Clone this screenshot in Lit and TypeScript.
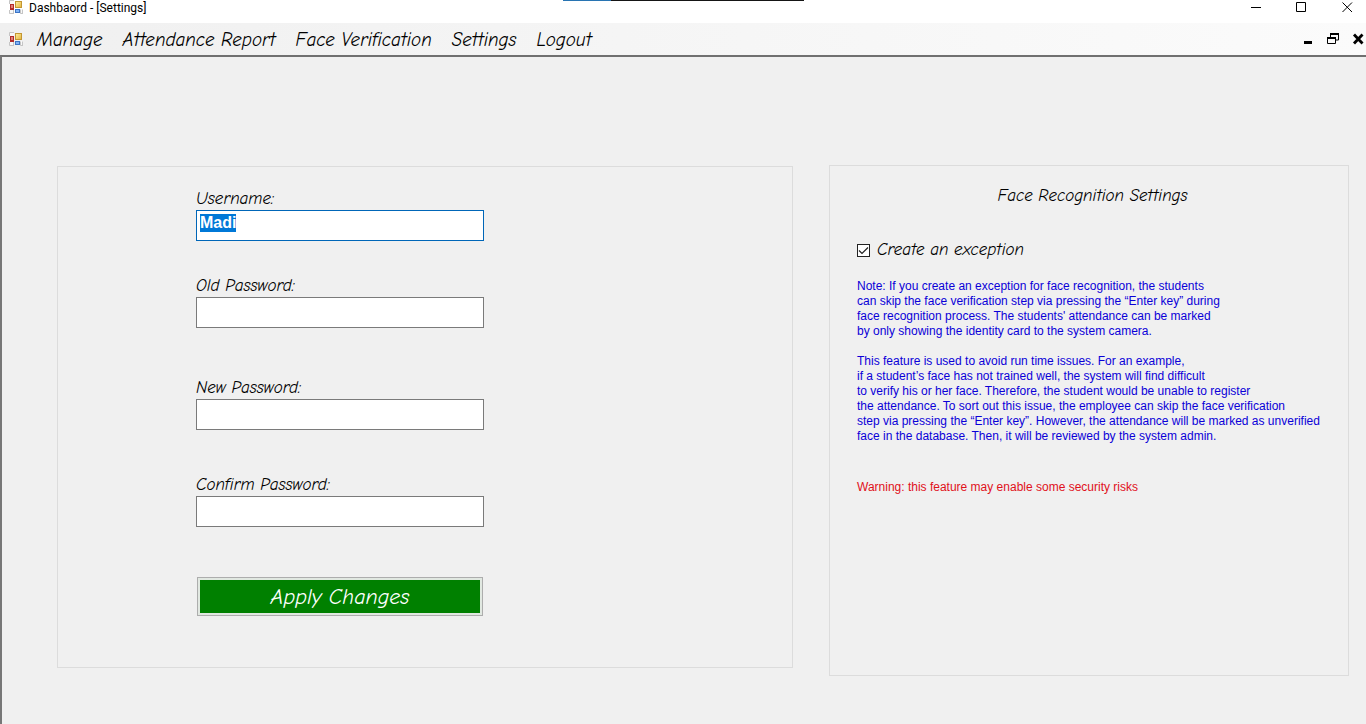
import { LitElement, html, css, svg } from "lit";
import { customElement, state, query } from "lit/decorators.js";

const appIcon = html`<svg class="app-icon" viewBox="0 0 14 14" width="14" height="14" aria-hidden="true">
  ${svg`
  <defs>
    <linearGradient id="gold" x1="0" y1="0" x2="1" y2="1"><stop offset="0" stop-color="#fff0a0"/><stop offset="1" stop-color="#e3b23a"/></linearGradient>
  </defs>
  <path d="M0 0h5v4H0zM0 10h5v4H0zM11 9h3v5h-3z" fill="#f8f8f8"/>
  <path d="M.5 4V.5H5M.5 10v3.500H5M4.500 9.500V14M11.500 9.500v4H14M13.500 9.500V14" fill="none" stroke="#c5c5c5"/>
  <rect x="1" y="4" width="4" height="6" fill="#b32b28"/><rect x="2" y="5" width="2" height="3" fill="#e0807a"/>
  <rect x="6.500" y="1.500" width="6" height="6" fill="url(#gold)" stroke="#c39632"/>
  <rect x="6" y="9" width="5" height="4" fill="#3c74c4"/><rect x="7" y="10" width="3" height="2" fill="#7fb2f5"/>`}
</svg>`;

const fields = [
  { id: "username", label: "Username:", type: "text", value: "Madi" },
  { id: "old-password", label: "Old Password:", type: "password", value: "" },
  { id: "new-password", label: "New Password:", type: "password", value: "" },
  { id: "confirm-password", label: "Confirm Password:", type: "password", value: "" },
];

@customElement("app-root")
class AppRoot extends LitElement {
  @state() private exception = true;
  @query("#username") private username!: HTMLInputElement;

  static styles = css`
    :host {
      display: flex;
      flex-direction: column;
      min-height: 100vh;
      overflow: hidden;
      background: #f0f0f0;
      color: #000;
      font-family: "Comic Sans MS", "Comic Neue", "Noto Sans", sans-serif;
      font-style: italic;
    }
    * { box-sizing: border-box; }
    .titlebar {
      position: relative;
      display: flex;
      align-items: flex-start;
      height: 23px;
      padding-left: 9px;
      background: #fff;
      font: 12px/16px Roboto, "Open Sans", sans-serif;
    }
    .title { margin: 0 auto 0 6px; font: inherit; }
    .strip { position: absolute; top: 0; left: 563px; width: 241px; height: 1px; background: linear-gradient(to right, #2874b2 20%, #151515 20%); }
    .app-icon { display: block; flex: none; }
    .winbtn, .mdibtn { display: grid; place-items: center; padding: 0; border: 0; background: none; color: #000; }
    .winbtn { width: 46px; height: 15px; }
    .winbtn:last-child { margin-right: -4px; }
    .menubar {
      display: flex;
      align-items: center;
      height: 32px;
      padding-left: 9px;
      background: linear-gradient(to right, #f0f0f0, #fbfbfb);
    }
    .menu { display: flex; gap: 20px; margin: 0 auto 0 14px; }
    .menu a { padding-top: 2px; color: #000; text-decoration: none; font-size: 19px; line-height: 30px; white-space: nowrap; }
    .mdibtn { width: 25px; height: 20px; }
    .mdibtn:last-child { margin-right: -4px; }
    .workspace {
      flex: 1;
      display: grid;
      grid-template-columns: 736fr 520fr;
      gap: 36px;
      align-items: start;
      padding: 108px 17px 48px 55px;
      border-top: 2px solid #707070;
      border-left: 2px solid #777;
    }
    .panel { border: 1px solid #dcdcdc; }
    .account { margin-top: 1px; padding: 21px 138px 51px; }
    .form { width: 288px; max-width: 100%; }
    .field { display: flex; flex-direction: column; }
    .field label { font-size: 17px; line-height: 22px; }
    .old-password { margin-top: 34px; }
    .new-password { margin-top: 49px; }
    .confirm-password { margin-top: 44px; }
    .field input {
      width: 100%;
      height: 31px;
      margin: 0;
      padding: 3px 3px 8px;
      border: 1px solid #7a7a7a;
      border-radius: 0;
      outline: none;
      background: #fff;
      color: #000;
      caret-color: transparent;
      font: bold 16px/18px "Liberation Sans", Arial, sans-serif;
    }
    .field input:focus { border-color: #0066b8; }
    .field input::selection { background: #0078d7; color: #fff; }
    .apply {
      display: block;
      width: 286px;
      height: 39px;
      margin: 50px 1px 0;
      padding: 2px 0 0;
      border: 1px solid #adadad;
      background: #008000;
      box-shadow: inset 0 0 0 2px #e1e8e1;
      color: #fff;
      font-family: inherit;
      font-style: inherit;
      font-size: 22px;
      line-height: 35px;
    }
    .recognition { min-height: 511px; padding: 18px 20px 20px 27px; }
    .heading { margin: 0; font-size: 17px; line-height: 24px; font-weight: normal; text-align: center; }
    .check { display: flex; align-items: center; gap: 7px; margin-top: 30px; font-size: 17px; line-height: 24px; }
    .check input {
      appearance: none;
      width: 13px;
      height: 13px;
      margin: 0;
      border: 1px solid #222;
      background: #fff;
    }
    .check input:checked {
      background: #fff url("data:image/svg+xml,%3Csvg xmlns='http://www.w3.org/2000/svg' viewBox='0 0 11 11'%3E%3Cpath d='M1 5.500l3 3L10 2.500' fill='none' stroke='%23222' stroke-width='1.200'/%3E%3C/svg%3E");
    }
    .note { margin: 17px 0 0; font: 12px/15px "Liberation Sans", Arial, sans-serif; white-space: pre-line; color: #0b00d8; }
    .note + .note { margin-top: 15px; }
    .note.warning { margin-top: 36px; color: #e0101b; }
  `;

  firstUpdated() {
    this.username.focus();
    this.username.select();
  }

  render() {
    return html`
      <header class="titlebar">
        ${appIcon}
        <h1 class="title">Dashbaord - [Settings]</h1>
        <div class="strip"></div>
        <button class="winbtn" aria-label="Minimize"><svg width="11" height="11"><path d="M1 5.500h10" stroke="#000" /></svg></button>
        <button class="winbtn" aria-label="Maximize"><svg width="11" height="11"><path d="M.5 .5h9v9h-9z" fill="none" stroke="#000" /></svg></button>
        <button class="winbtn" aria-label="Close"><svg width="11" height="11"><path d="M.5 .5l9.500 9.500M10 .5l-9.500 9.500" stroke="#000" /></svg></button>
      </header>
      <div class="menubar">
        ${appIcon}
        <nav class="menu">
          ${["Manage", "Attendance Report", "Face Verification", "Settings", "Logout"].map((m) => html`<a href="#">${m}</a>`)}
        </nav>
        <button class="mdibtn" aria-label="Minimize child"><svg width="12" height="12"><path d="M2 8h8v3H2z" /></svg></button>
        <button class="mdibtn" aria-label="Restore child"><svg width="12" height="12"><path d="M3.500 4V1.500h8v5.500H9" fill="none" stroke="#000" /><path d="M3 0h9v2H3zM0 4h9v2H0z" /><path d="M.5 5v5.500h8V5" fill="none" stroke="#000" /></svg></button>
        <button class="mdibtn" aria-label="Close child"><svg width="12" height="12"><path d="M2 1.500l8.500 9M10.500 1.500l-8.500 9" stroke="#000" stroke-width="2.800" /></svg></button>
      </div>
      <main class="workspace">
        <section class="panel account">
          <form class="form" @submit=${(e: Event) => e.preventDefault()}>
            ${fields.map(
              (f) => html`<div class="field ${f.id}">
                <label for=${f.id}>${f.label}</label>
                <input id=${f.id} type=${f.type} .value=${f.value} autocomplete="off" spellcheck="false" />
              </div>`
            )}
            <button class="apply" type="submit">Apply Changes</button>
          </form>
        </section>
        <section class="panel recognition">
          <h2 class="heading">Face Recognition Settings</h2>
          <label class="check">
            <input type="checkbox" .checked=${this.exception} @change=${(e: Event) => (this.exception = (e.target as HTMLInputElement).checked)} />
            Create an exception
          </label>
          <p class="note">Note: If you create an exception for face recognition, the students
can skip the face verification step via pressing the “Enter key” during
face recognition process. The students' attendance can be marked
by only showing the identity card to the system camera.</p>
          <p class="note">This feature is used to avoid run time issues. For an example,
if a student’s face has not trained well, the system will find difficult
to verify his or her face. Therefore, the student would be unable to register
the attendance. To sort out this issue, the employee can skip the face verification
step via pressing the “Enter key”. However, the attendance will be marked as unverified
face in the database. Then, it will be reviewed by the system admin.</p>
          <p class="note warning">Warning: this feature may enable some security risks</p>
        </section>
      </main>
    `;
  }
}
